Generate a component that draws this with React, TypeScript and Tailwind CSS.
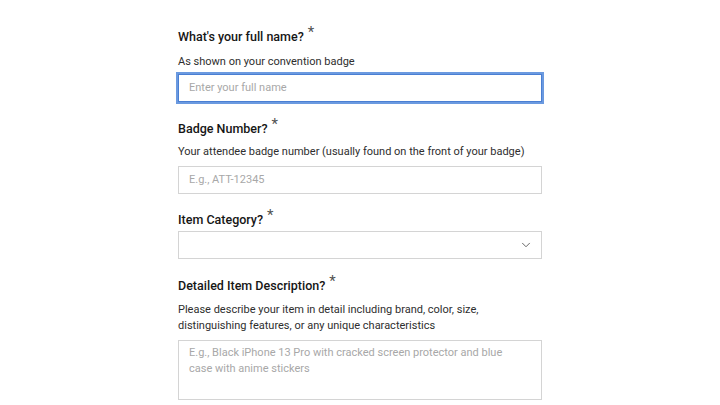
import { ChevronDown } from 'lucide-react';

const font = { fontFamily: 'Roboto, "Liberation Sans", sans-serif' };

function Label({ children }: { children: React.ReactNode }) {
  return (
    <div className="flex items-start text-[12.5px] font-medium text-[#161616] leading-[16px]">
      <span>{children}</span>
      <span className="relative -top-[5px] ml-[4px] text-[15px] font-normal text-[#525252]">*</span>
    </div>
  );
}

function Help({ children }: { children: React.ReactNode }) {
  return <p className="text-[11px] leading-[16px] text-[#2e2e2e]">{children}</p>;
}

export default function App() {
  return (
    <div className="w-[720px] h-[405px] overflow-hidden bg-white" style={font}>
      <div className="w-[364px] ml-[178px] pt-[29px] flex flex-col">
        <Label>What's your full name?</Label>
        <div className="mt-[9px]">
          <Help>As shown on your convention badge</Help>
        </div>
        <div className="mt-[4px] h-[28px] border border-[#4a7fd3] outline-2 outline-[#6b9ae0] flex items-center px-[10px] text-[11px] text-[#a8a8a8]">
          Enter your full name
        </div>

        <div className="mt-[19px]">
          <Label>Badge Number?</Label>
        </div>
        <div className="mt-[7px]">
          <Help>Your attendee badge number (usually found on the front of your badge)</Help>
        </div>
        <div className="mt-[6px] h-[28px] border border-[#d4d4d4] flex items-center px-[10px] text-[11px] text-[#a8a8a8]">
          E.g., ATT-12345
        </div>

        <div className="mt-[18px]">
          <Label>Item Category?</Label>
        </div>
        <div className="mt-[3px] h-[28px] border border-[#d4d4d4] flex items-center justify-end pr-[8px]">
          <ChevronDown size={14} strokeWidth={1.5} className="text-[#525252]" />
        </div>

        <div className="mt-[19px]">
          <Label>Detailed Item Description?</Label>
        </div>
        <div className="mt-[8px]">
          <Help>
            Please describe your item in detail including brand, color, size,
            <br />
            distinguishing features, or any unique characteristics
          </Help>
        </div>
        <div className="mt-[6px] h-[60px] border border-[#d4d4d4] px-[10px] pt-[4px] text-[11px] leading-[16px] text-[#a8a8a8]">
          E.g., Black iPhone 13 Pro with cracked screen protector and blue
          <br />
          case with anime stickers
        </div>
      </div>
    </div>
  );
}
